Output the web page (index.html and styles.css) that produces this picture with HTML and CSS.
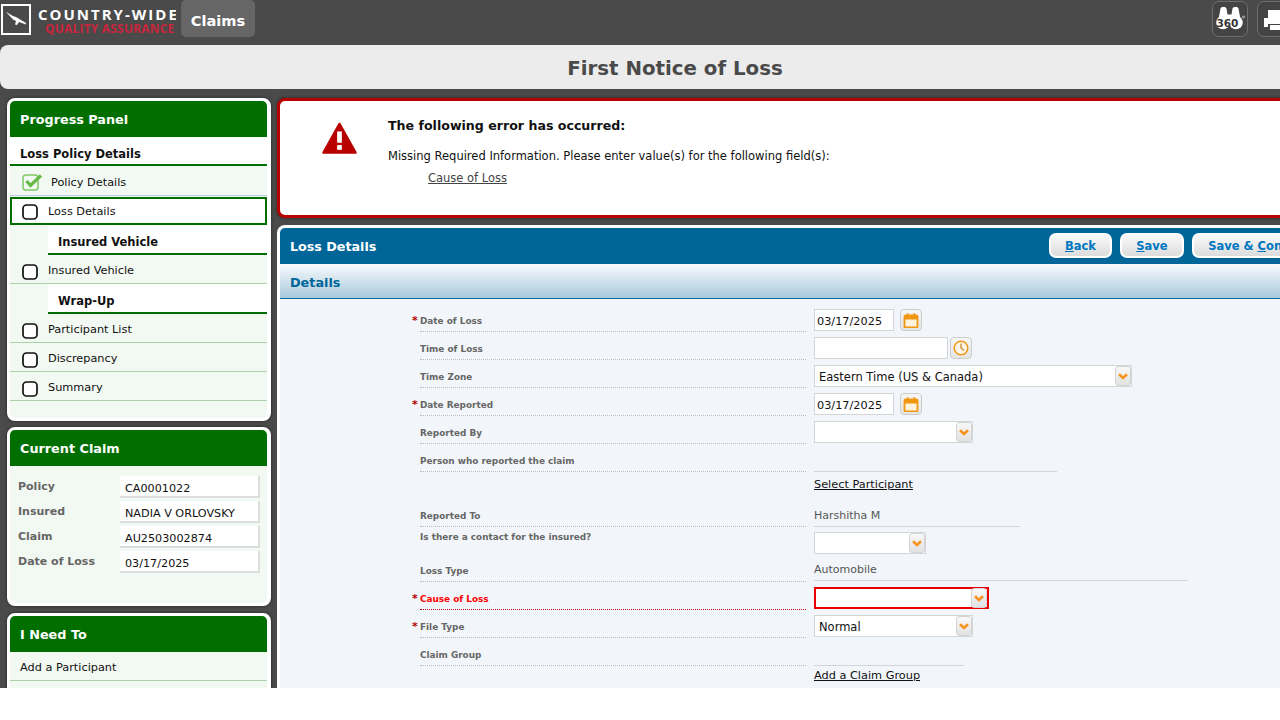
FILE: index.html
```html
<!DOCTYPE html>
<html lang="en">
<head>
  <meta charset="UTF-8">
  <title>First Notice of Loss</title>
  <link rel="stylesheet" href="styles.css">
</head>
<body>
  <svg class="defs" width="0" height="0">
    <symbol id="chev" viewBox="0 0 10 7"><path d="M1 1.200l4 3.800 4-3.800" fill="none" stroke="#f7931e" stroke-width="2.600"/></symbol>
    <symbol id="cal" viewBox="0 0 16 15">
      <path d="M1.500 3.500a1 1 0 0 1 1-1h11a1 1 0 0 1 1 1v10a1 1 0 0 1-1 1h-11a1 1 0 0 1-1-1z" fill="#fdf3dc" stroke="#f0960f" stroke-width="1.800"/>
      <rect x="1.500" y="2.500" width="13" height="4" fill="#f0960f"/>
      <rect x="3.800" y="0.300" width="1.800" height="3" fill="#f0960f"/>
      <rect x="10.400" y="0.300" width="1.800" height="3" fill="#f0960f"/>
    </symbol>
    <symbol id="box" viewBox="0 0 16 16"><rect x="1" y="1" width="14" height="14" rx="3.500" fill="#fff" stroke="#111" stroke-width="1.700"/></symbol>
  </svg>

  <div class="app">
    <header class="topbar">
      <div class="logo">
        <span class="logo-mark">
          <svg width="22" height="20" viewBox="0 0 22 20"><path d="M1 2l7 4 3 1 10 6 0 1.500-7-2.500-2 3-2-.5 1-3.500-3-1.500z" fill="#fff"/></svg>
        </span>
        <div class="logo-text">
          <div class="logo-top">COUNTRY-WIDE</div>
          <div class="logo-sub">QUALITY ASSURANCE</div>
        </div>
      </div>
      <a class="tab">Claims</a>
      <div class="tools">
        <span class="tool">
          <svg width="30" height="26" viewBox="0 0 30 26">
            <circle cx="8" cy="16.500" r="6.800" fill="#fff"/>
            <circle cx="21" cy="16.500" r="6.800" fill="#fff"/>
            <path d="M5.500 2.500a2 2 0 0 1 2-1.500h2a2 2 0 0 1 2 1.500l1 6h4l1-6a2 2 0 0 1 2-1.500h2a2 2 0 0 1 2 1.500l2 11h-22z" fill="#fff"/>
            <text x="1.500" y="21" class="tool-num">360</text>
            <circle cx="28.500" cy="11" r="1" fill="none" stroke="#fff" stroke-width=".6"/>
          </svg>
        </span>
        <span class="tool">
          <svg width="30" height="26" viewBox="0 0 30 26">
            <path d="M8 4h14l3 3v5H8z" fill="#fff"/>
            <path d="M4 12h24v9h-4v-3H8v3H4z" fill="#fff"/>
            <rect x="10" y="19" width="12" height="5" fill="#fff"/>
          </svg>
        </span>
      </div>
    </header>

    <div class="titlebar"><h1>First Notice of Loss</h1></div>

    <div class="columns">
      <aside class="sidebar">
        <section class="panel progress">
          <h2 class="panel-head">Progress Panel</h2>
          <h3 class="step-head">Loss Policy Details</h3>
          <div class="step step-done">
            <svg class="check" width="22" height="18" viewBox="0 0 22 18">
              <rect x="1" y="2" width="15" height="15" rx="3" fill="#f2f8f2" stroke="#7fc763" stroke-width="1.500"/>
              <path d="M4.500 8l4 4.500L19 2.500" fill="none" stroke="#65b947" stroke-width="3.200"/>
            </svg>
            Policy Details
          </div>
          <div class="step step-current"><svg class="box" width="16" height="16"><use href="#box"/></svg>Loss Details</div>
          <div class="step-sub"><h3 class="step-head">Insured Vehicle</h3></div>
          <div class="step"><svg class="box" width="16" height="16"><use href="#box"/></svg>Insured Vehicle</div>
          <div class="step-sub"><h3 class="step-head">Wrap-Up</h3></div>
          <div class="step"><svg class="box" width="16" height="16"><use href="#box"/></svg>Participant List</div>
          <div class="step"><svg class="box" width="16" height="16"><use href="#box"/></svg>Discrepancy</div>
          <div class="step"><svg class="box" width="16" height="16"><use href="#box"/></svg>Summary</div>
        </section>

        <section class="panel claim">
          <h2 class="panel-head">Current Claim</h2>
          <dl class="claim-list">
            <dt>Policy</dt><dd>CA0001022</dd>
            <dt>Insured</dt><dd>NADIA V ORLOVSKY</dd>
            <dt>Claim</dt><dd>AU2503002874</dd>
            <dt>Date of Loss</dt><dd>03/17/2025</dd>
          </dl>
        </section>

        <section class="panel need">
          <h2 class="panel-head">I Need To</h2>
          <div class="need-row">Add a Participant</div>
        </section>
      </aside>

      <main class="content">
        <section class="error">
          <svg class="error-icon" width="35" height="33" viewBox="0 0 37 35">
            <path d="M18.500 2L35.500 32.500H1.500z" fill="#b80000" stroke="#b80000" stroke-width="2.500" stroke-linejoin="round"/>
            <rect x="16" y="10" width="5" height="12" fill="#fff"/>
            <rect x="16" y="24.500" width="5" height="5" fill="#fff"/>
          </svg>
          <div class="error-text">
            <h2>The following error has occurred:</h2>
            <p>Missing Required Information. Please enter value(s) for the following field(s):</p>
            <a class="error-link">Cause of Loss</a>
          </div>
        </section>

        <section class="loss">
          <div class="loss-head">
            <h2>Loss Details</h2>
            <div class="loss-actions">
              <button class="btn btn-back"><u>B</u>ack</button>
              <button class="btn btn-save"><u>S</u>ave</button>
              <button class="btn btn-cont">Save &amp; <u>C</u>ontinue</button>
            </div>
          </div>
          <div class="details-band">Details</div>

          <div class="form">
            <div class="row">
              <span class="star">*</span><label class="lbl">Date of Loss</label>
              <div class="val"><input class="inp inp-date" value="03/17/2025"><span class="pick"><svg width="16" height="15"><use href="#cal"/></svg></span></div>
            </div>
            <div class="row">
              <span class="star"></span><label class="lbl">Time of Loss</label>
              <div class="val"><input class="inp inp-time"><span class="pick pick-time">
                <svg width="16" height="16" viewBox="0 0 16 16"><circle cx="8" cy="8" r="6.800" fill="#fdf6e8" stroke="#f09a1a" stroke-width="1.500"/><path d="M8 3.500V8l3 2.500" fill="none" stroke="#c98a2a" stroke-width="1.300"/></svg>
              </span></div>
            </div>
            <div class="row">
              <span class="star"></span><label class="lbl">Time Zone</label>
              <div class="val"><div class="sel sel-zone">Eastern Time (US &amp; Canada)<span class="arrow"><svg width="10" height="7"><use href="#chev"/></svg></span></div></div>
            </div>
            <div class="row">
              <span class="star">*</span><label class="lbl">Date Reported</label>
              <div class="val"><input class="inp inp-date" value="03/17/2025"><span class="pick"><svg width="16" height="15"><use href="#cal"/></svg></span></div>
            </div>
            <div class="row">
              <span class="star"></span><label class="lbl">Reported By</label>
              <div class="val"><div class="sel sel-md"><span class="arrow"><svg width="10" height="7"><use href="#chev"/></svg></span></div></div>
            </div>
            <div class="row">
              <span class="star"></span><label class="lbl">Person who reported the claim</label>
              <div class="val val-flush"><div class="line line-person"></div></div>
            </div>
            <div class="row row-link">
              <span class="star"></span><div class="lbl lbl-empty"></div>
              <div class="val"><a class="link">Select Participant</a></div>
            </div>
            <div class="row row-reported">
              <span class="star"></span><label class="lbl">Reported To</label>
              <div class="val val-flush"><div class="static static-reported">Harshitha M</div></div>
            </div>
            <div class="row row-contact">
              <span class="star"></span><label class="lbl lbl-empty lbl-top">Is there a contact for the insured?</label>
              <div class="val val-flush"><div class="sel sel-sm"><span class="arrow"><svg width="10" height="7"><use href="#chev"/></svg></span></div></div>
            </div>
            <div class="row">
              <span class="star"></span><label class="lbl">Loss Type</label>
              <div class="val"><div class="static static-type">Automobile</div></div>
            </div>
            <div class="row row-bad">
              <span class="star">*</span><label class="lbl">Cause of Loss</label>
              <div class="val"><div class="sel sel-cause"><span class="arrow"><svg width="10" height="7"><use href="#chev"/></svg></span></div></div>
            </div>
            <div class="row">
              <span class="star">*</span><label class="lbl">File Type</label>
              <div class="val"><div class="sel sel-md">Normal<span class="arrow"><svg width="10" height="7"><use href="#chev"/></svg></span></div></div>
            </div>
            <div class="row">
              <span class="star"></span><label class="lbl">Claim Group</label>
              <div class="val val-flush"><div class="line line-group"></div></div>
            </div>
            <div class="row row-link row-last">
              <span class="star"></span><div class="lbl lbl-empty"></div>
              <div class="val"><a class="link">Add a Claim Group</a></div>
            </div>
          </div>
        </section>
      </main>
    </div>
  </div>
</body>
</html>
```

FILE: styles.css
```css
:root {
  --dark: #4a4a4a;
  --green: #006f00;
  --green-bg: #f2f8f2;
  --green-line: #a8d4a8;
  --blue: #006699;
  --form-bg: #f2f6fa;
  --field-line: #d2d6d8;
  --label: #666;
  --red: #b80000;
}

* {
  box-sizing: border-box;
}

html, body {
  margin: 0;
  background: #fff;
  overflow: hidden;
}

body {
  width: 1280px;
  height: 720px;
  font-family: "DejaVu Sans", Verdana, sans-serif;
  font-size: 11.3px;
  color: #111;
}

.defs {
  position: absolute;
}

h1, h2, h3, p, dl, dd {
  margin: 0;
}

.app {
  width: 1350px;
  height: 688px;
  background: var(--dark);
  overflow: hidden;
}

/* top bar */
.topbar {
  display: flex;
  height: 45px;
}

.logo {
  display: flex;
  width: 176px;
  overflow: hidden;
  padding: 4px 0 0 1px;
}

.logo-mark {
  display: flex;
  align-items: center;
  justify-content: center;
  flex: none;
  width: 30px;
  height: 31px;
  border: 2px solid #fff;
}

.logo-text {
  margin-left: 7px;
  white-space: nowrap;
  font-family: "Open Sans", sans-serif;
  font-weight: 700;
}

.logo-top {
  color: #fff;
  font-size: 15px;
  line-height: 16px;
  letter-spacing: 2px;
  margin-top: 2px;
}

.logo-sub {
  color: #c9253c;
  font-size: 12px;
  line-height: 13px;
  letter-spacing: .2px;
  margin-left: 7px;
}

.tab {
  width: 74px;
  height: 37px;
  margin-left: 5px;
  background: #666;
  border-radius: 5px;
  color: #fff;
  font-size: 14.600px;
  font-weight: 700;
  line-height: 41px;
  text-align: center;
}

.tools {
  display: flex;
  gap: 9px;
  margin-left: 957px;
  padding-top: 1px;
}

.tool {
  display: flex;
  align-items: center;
  justify-content: center;
  width: 36px;
  height: 36px;
  background: #444;
  border: 1px solid #6e6e6e;
  border-radius: 7px;
}

.tool-num {
  fill: #333;
  font-size: 10.500px;
  font-weight: 700;
}

/* title */
.titlebar {
  height: 44px;
  background: #ececec;
  border-radius: 8px;
}

.titlebar h1 {
  color: var(--dark);
  font-size: 19.800px;
  line-height: 47px;
  text-align: center;
}

.columns {
  display: flex;
  padding: 9px 0 0 7px;
}

/* sidebar */
.sidebar {
  flex: none;
  display: flex;
  flex-direction: column;
  width: 264px;
  margin-right: 6px;
}

.panel {
  background: var(--green-bg);
  border: 3px solid #fff;
  border-right-width: 4px;
  border-radius: 8px;
  box-shadow: 0 0 3px #222;
}

.progress {
  height: 323px;
  margin-bottom: 6px;
}

.claim {
  height: 179px;
  margin-bottom: 7px;
}

.need {
  height: 90px;
}

.panel-head {
  height: 36px;
  background: var(--green);
  border-radius: 5px 5px 0 0;
  color: #fff;
  font-size: 12.800px;
  line-height: 38px;
  padding-left: 10px;
}

.step-head {
  height: 29px;
  background: #fff;
  border-bottom: 2px solid var(--green);
  font-size: 11.500px;
  line-height: 35px;
  padding-left: 10px;
}

.step-sub {
  padding-left: 38px;
}

.step {
  display: flex;
  align-items: center;
  height: 29px;
  border-bottom: 1px solid var(--green-line);
  padding: 2px 0 0 12px;
}

.step-sub .step-head {
  height: 30px;
  line-height: 35px;
}

.box {
  margin: 3px 10px 0 0;
  flex: none;
}

.check {
  margin-right: 7px;
  flex: none;
}

.step-done {
  height: 30px;
  border-bottom-color: #bcd;
  padding-top: 3px;
}

.step-current {
  height: 28px;
  margin-top: 1px;
  background: #fff;
  border: 2px solid var(--green);
  padding: 0 0 0 10px;
}

.step-current .box {
  margin-top: 1px;
}

.claim-list {
  display: grid;
  grid-template-columns: 102px 140px;
  grid-auto-rows: 22px;
  row-gap: 3px;
  padding: 10px 0 0 8px;
}

.claim-list dt {
  color: var(--label);
  font-size: 11px;
  font-weight: 700;
  line-height: 21px;
}

.claim-list dd {
  background: #fff;
  border-right: 2px solid #ddd;
  border-bottom: 2px solid #ddd;
  font-size: 11.200px;
  line-height: 25px;
  padding-left: 5px;
}

.need-row {
  height: 29px;
  border-bottom: 1px solid var(--green-line);
  line-height: 31px;
  padding-left: 10px;
}

/* main */
.content {
  flex: none;
  width: 1067px;
}

.error {
  display: flex;
  height: 120px;
  background: #fff;
  border: 3px solid var(--red);
  border-radius: 8px;
  box-shadow: 0 0 3px #222;
  padding: 21px 0 0 42px;
}

.error-icon {
  flex: none;
  margin-right: 31px;
}

.error-text h2 {
  font-size: 12.600px;
  line-height: 16px;
  margin-top: -4px;
}

.error-text p {
  font-size: 11.500px;
  margin-top: 14px;
  line-height: 16px;
}

.error-link {
  display: inline-block;
  margin: 6px 0 0 40px;
  color: #444;
  font-size: 11.500px;
  line-height: 16px;
  text-decoration: underline;
}

.loss {
  height: 470px;
  margin-top: 7px;
  background: var(--form-bg);
  border: 3px solid #fff;
  border-radius: 8px 8px 0 0;
  border-bottom: 0;
}

.loss-head {
  display: flex;
  align-items: center;
  justify-content: space-between;
  height: 36px;
  background: var(--blue);
  border-radius: 5px 5px 0 0;
  color: #fff;
  padding-left: 10px;
}

.loss-head h2 {
  font-size: 12.700px;
}

.loss-actions {
  display: flex;
  gap: 8px;
  margin-top: -1px;
}

.btn {
  height: 25px;
  background: linear-gradient(#fafafa, #dcdcdc);
  border: 2px solid #fff;
  border-radius: 7px;
  color: #0077c0;
  font-family: inherit;
  font-size: 11.500px;
  font-weight: 700;
  padding: 0;
}

.btn-back { width: 63px; }
.btn-save { width: 64px; }
.btn-cont { width: 140px; margin-right: 9px; }

.details-band {
  height: 35px;
  background: linear-gradient(#f8fbfc, #a9c9dc);
  border-bottom: 1px solid var(--blue);
  color: var(--blue);
  font-size: 12.800px;
  font-weight: 700;
  line-height: 38px;
  padding-left: 10px;
}

.form {
  padding: 5px 0 0 132px;
}

.row {
  display: flex;
  height: 28px;
}

.star {
  flex: none;
  width: 8px;
  color: var(--red);
  font-size: 11px;
  font-weight: 700;
  line-height: 24px;
  padding-top: 5px;
}

.lbl {
  flex: none;
  width: 386px;
  border-bottom: 1px dotted #bbb;
  color: var(--label);
  font-size: 8.900px;
  font-weight: 700;
  line-height: 11px;
  padding-top: 12px;
}

.lbl-empty {
  border-bottom: 0;
}

.lbl-top {
  padding-top: 5px;
}

.val {
  display: flex;
  align-items: flex-end;
  gap: 6px;
  margin-left: 8px;
  padding-bottom: 1px;
}

.val-flush {
  padding-bottom: 0;
}

.inp {
  height: 22px;
  background: #fff;
  border: 1px solid var(--field-line);
  font-family: inherit;
  font-size: 11.300px;
  color: #111;
  padding: 2px 2px 0;
  outline: none;
}

.inp-date { width: 80px; }
.inp-time { width: 134px; }

.pick {
  display: flex;
  align-items: center;
  justify-content: center;
  width: 22px;
  height: 22px;
  background: linear-gradient(#f6f6f6, #e4e4e4);
  border: 1px solid #ccc;
  border-radius: 4px;
}

.pick-time {
  margin-left: -4px;
}

.sel {
  display: flex;
  align-items: center;
  justify-content: space-between;
  height: 22px;
  background: #fff;
  border: 1px solid var(--field-line);
  font-size: 11.500px;
  line-height: 22px;
  padding-left: 4px;
  padding-top: 1px;
}

.sel .arrow {
  margin-top: -1px;
}

.sel-zone { width: 318px; }
.sel-md { width: 159px; }
.sel-sm { width: 112px; }

.sel-sm {
  justify-content: flex-end;
}

.sel-cause {
  width: 175px;
  border: 2px solid #e80000;
  justify-content: flex-end;
}

.arrow {
  display: flex;
  align-items: center;
  justify-content: center;
  width: 16px;
  height: 20px;
  background: linear-gradient(#f8f8f8, #e2e2e2);
  border: 1px solid #d4d4d4;
  border-radius: 3px;
}

.sel > .arrow:only-child {
  margin-left: auto;
}

.line {
  height: 1px;
  background: var(--field-line);
}

.line-person { width: 243px; }
.line-group { width: 150px; }

.row-link {
  height: 26px;
}

.row-link .val {
  align-items: flex-start;
  padding: 6px 0 0;
}

.row-last {
  height: 22px;
}

.row-last .val {
  padding-top: 3px;
}

.link {
  color: #111;
  text-decoration: underline;
}

.row-reported {
  height: 29px;
}

.row-reported .lbl {
  padding-top: 13px;
}

.row-contact {
  height: 27px;
}

.row-bad .lbl {
  color: #f00;
  border-bottom-color: var(--red);
}

.static {
  height: 27px;
  border-bottom: 1px solid var(--field-line);
  color: #555;
  font-size: 11px;
  line-height: 32px;
}

.static-reported { width: 206px; }
.static-type { width: 374px; }
```
